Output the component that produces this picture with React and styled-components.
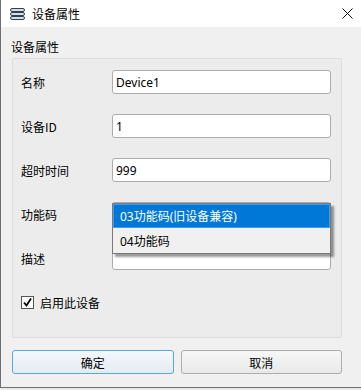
import React from 'react';
import styled, { createGlobalStyle } from 'styled-components';

const GlobalStyle = createGlobalStyle`
  html, body {
    margin: 0;
    padding: 0;
    background: #e9e9e9;
  }
  * {
    box-sizing: border-box;
  }
`;

const Window = styled.div`
  width: 361px;
  height: 388px;
  display: flex;
  flex-direction: column;
  border-left: 1px solid #6f6f6f;
  border-bottom: 1px solid #6f6f6f;
  background: #f0f0f0;
  font-family: "Noto Sans CJK SC", "Noto Sans", sans-serif;
  font-size: 12px;
  color: #000;
`;

const TitleBar = styled.div`
  height: 27px;
  flex: none;
  display: flex;
  align-items: center;
  background: #fff;
  padding-left: 9px;
  padding-right: 8px;
`;

const TitleText = styled.span`
  margin-left: 7px;
  font-size: 12px;
  flex: 1;
`;

const Body = styled.div`
  flex: 1;
  display: flex;
  flex-direction: column;
  padding: 10px 19px 0 10px;
`;

const GroupTitle = styled.div`
  line-height: 20px;
  height: 20px;
`;

const GroupBox = styled.div`
  margin-top: 1px;
  margin-left: 1px;
  height: 280px;
  border: 1px solid #dcdcdc;
  border-radius: 2px;
  background: #ececec;
  padding: 11px 10px 0 8px;
  display: flex;
  flex-direction: column;
  gap: 20px;
`;

const Row = styled.div`
  display: flex;
  align-items: center;
  height: 24px;
`;

const Label = styled.div`
  width: 91px;
  flex: none;
`;

const Field = styled.div`
  position: relative;
  flex: 1;
  height: 24px;
  background: #fff;
  border: 1px solid #acacac;
  border-radius: 3px;
  padding: 0 3px;
  display: flex;
  align-items: center;
  font-family: "Noto Sans", "Noto Sans CJK SC", sans-serif;
`;

const Popup = styled.div`
  position: absolute;
  left: -1px;
  right: -1px;
  top: 0;
  height: 51px;
  background: #f0f0f0;
  border: 1px solid #7a7a7a;
  box-shadow: 3px 3px 2px rgba(0, 0, 0, 0.4);
  display: flex;
  flex-direction: column;
  z-index: 2;
`;

const Option = styled.div`
  height: ${p => (p.$active ? 24 : 25)}px;
  display: flex;
  align-items: center;
  padding-left: 6px;
  font-family: "Noto Sans", "Noto Sans CJK SC", sans-serif;
  background: ${p => (p.$active ? '#0078d7' : 'transparent')};
  color: ${p => (p.$active ? '#fff' : '#000')};
  border: 1px solid ${p => (p.$active ? '#3c9cf0' : 'transparent')};
`;

const CheckRow = styled.label`
  display: flex;
  align-items: center;
  height: 24px;
  gap: 6px;
`;

const CheckBox = styled.span`
  width: 13px;
  height: 13px;
  border: 1px solid #555;
  background: #fff;
  display: flex;
  align-items: center;
  justify-content: center;
`;

const Buttons = styled.div`
  display: flex;
  gap: 7px;
  margin-top: 12px;
  padding-left: 1px;
`;

const Button = styled.div`
  width: 162px;
  height: 24px;
  display: flex;
  align-items: center;
  justify-content: center;
  border-radius: 3px;
  border: 1px solid ${p => (p.$primary ? '#56a7e8' : '#adadad')};
  background: ${p =>
    p.$primary
      ? 'linear-gradient(#f4f8fb, #e3ebf2)'
      : 'linear-gradient(#f7f7f7, #e9e9e9)'};
`;

const AppIcon = () => (
  <svg width="15" height="12" viewBox="0 0 15 12">
    {[0.5, 4.5, 8.5].map(y => (
      <rect key={y} x="0.5" y={y} width="14" height="3" rx="1.5" fill="#cfe0f3" stroke="#3a3f47" />
    ))}
  </svg>
);

const CloseIcon = () => (
  <svg width="11" height="11" viewBox="0 0 11 11">
    <path d="M0.5 0.5 L10.5 10.5 M10.5 0.5 L0.5 10.5" stroke="#111" strokeWidth="1" />
  </svg>
);

const Check = () => (
  <svg width="11" height="11" viewBox="0 0 11 11">
    <path d="M2 5.5 L4.5 8.5 L9 1.5" stroke="#000" strokeWidth="1.8" fill="none" />
  </svg>
);

export default function App() {
  return (
    <>
      <GlobalStyle />
      <Window>
        <TitleBar>
          <AppIcon />
          <TitleText>设备属性</TitleText>
          <CloseIcon />
        </TitleBar>
        <Body>
          <GroupTitle>设备属性</GroupTitle>
          <GroupBox>
            <Row>
              <Label>名称</Label>
              <Field>Device1</Field>
            </Row>
            <Row>
              <Label>设备ID</Label>
              <Field>1</Field>
            </Row>
            <Row>
              <Label>超时时间</Label>
              <Field>999</Field>
            </Row>
            <Row>
              <Label>功能码</Label>
              <Field>
                <Popup>
                  <Option $active>03功能码(旧设备兼容)</Option>
                  <Option>04功能码</Option>
                </Popup>
              </Field>
            </Row>
            <Row>
              <Label>描述</Label>
              <Field />
            </Row>
            <CheckRow>
              <CheckBox>
                <Check />
              </CheckBox>
              启用此设备
            </CheckRow>
          </GroupBox>
          <Buttons>
            <Button $primary>确定</Button>
            <Button>取消</Button>
          </Buttons>
        </Body>
      </Window>
    </>
  );
}
